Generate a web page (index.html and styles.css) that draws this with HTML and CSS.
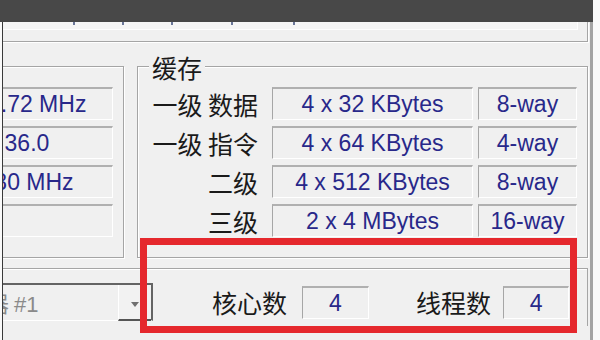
FILE: index.html
```html
<!DOCTYPE html>
<html lang="zh-CN">
<head>
    <meta charset="UTF-8">
    <meta name="viewport" content="width=device-width, initial-scale=1.0">
    <title>CPU 缓存</title>
    <link rel="stylesheet" href="styles.css">
</head>
<body>
    <div class="topbar"></div>

    <div class="frame">
        <!-- bottom edge of the box above, mostly scrolled away -->
        <div class="prev-box">
            <div class="prev-field">
                <span class="tick"></span>
                <span class="tick"></span>
                <span class="tick"></span>
                <span class="tick"></span>
                <span class="tick"></span>
            </div>
        </div>

        <div class="groups">
            <div class="group clocks">
                <div class="field clock">3591.72 MHz</div>
                <div class="field clock">x 36.0</div>
                <div class="field clock">99.80 MHz</div>
                <div class="field clock"></div>
            </div>

            <div class="group cache">
                <div class="legend">缓存</div>
                <div class="cache-grid">
                    <span class="label">一级 数据</span>
                    <div class="field">4 x 32 KBytes</div>
                    <div class="field">8-way</div>

                    <span class="label">一级 指令</span>
                    <div class="field">4 x 64 KBytes</div>
                    <div class="field">4-way</div>

                    <span class="label">二级</span>
                    <div class="field">4 x 512 KBytes</div>
                    <div class="field">8-way</div>

                    <span class="label">三级</span>
                    <div class="field">2 x 4 MBytes</div>
                    <div class="field">16-way</div>
                </div>
            </div>
        </div>

        <div class="bottom">
            <div class="combo">
                <span class="combo-text">处理器 <span class="latin">#1</span></span>
                <span class="combo-btn"><span class="arrow"></span></span>
            </div>
            <span class="blabel cores">核心数</span>
            <div class="field count first">4</div>
            <span class="blabel threads">线程数</span>
            <div class="field count second">4</div>
        </div>
    </div>

    <div class="highlight"></div>
</body>
</html>
```

FILE: styles.css
```css
* {
    box-sizing: border-box;
}

body {
    margin: 0;
    width: 600px;
    height: 340px;
    overflow: hidden;
    position: relative;
    background-color: #fafafa;
    font-family: "Noto Sans CJK SC", "Liberation Sans", sans-serif;
}

.topbar {
    width: 593px;
    height: 22px;
    background-color: #484848;
}

.frame {
    margin-left: 2px;
    width: 591px;
    height: 318px;
    background-color: #f0f0f0;
    border-left: 1px solid #3a3a3a;
    border-right: 3px solid #a4a4a4;
    overflow: hidden;
}

.prev-box {
    margin-left: -10px;
    width: 595px;
    height: 20px;
    border-bottom: 1px solid #a5a5a5;
    border-right: 1px solid #a5a5a5;
    box-shadow: 1px 1px 0 #fff;
}

.prev-field {
    display: flex;
    align-items: flex-start;
    width: 585px;
    height: 8px;
    background-color: #f6f6f6;
    border-bottom: 1px solid #fff;
    border-right: 1px solid #fff;
}

.tick {
    width: 2px;
    height: 3px;
    background-color: #6a7698;
}

.tick:nth-child(1) { margin-left: 80px; }
.tick:nth-child(2) { margin-left: 47px; }
.tick:nth-child(3) { margin-left: 47px; }
.tick:nth-child(4) { margin-left: 58px; }
.tick:nth-child(5) { margin-left: 60px; }

.groups {
    display: flex;
    gap: 13px;
    margin-top: 24px;
    margin-left: -10px;
}

.group {
    height: 192px;
    border: 1px solid #a5a5a5;
    box-shadow: inset 1px 1px 0 #fff, 1px 1px 0 #fff;
}

.clocks {
    width: 131px;
    padding: 20px 10px 0 0;
    display: flex;
    flex-direction: column;
    align-items: flex-end;
    gap: 6px;
}

.field {
    height: 33px;
    border-top: 2px solid #b0b0b0;
    border-left: 1px solid #a6a6a6;
    border-bottom: 1px solid #fff;
    border-right: 1px solid #fff;
    color: #28288a;
    font-family: "Liberation Sans", Arial, sans-serif;
    font-size: 23px;
    line-height: 30px;
    text-align: center;
    white-space: nowrap;
}

.clock {
    width: 190px;
}

.cache {
    width: 451px;
    padding: 0 10px 0 9px;
}

.legend {
    width: fit-content;
    margin: -14px 0 0 2px;
    padding: 0 3px;
    background-color: #f0f0f0;
    color: #1a1a1a;
    font-size: 25px;
    line-height: 28px;
}

.cache-grid {
    display: grid;
    grid-template-columns: 120px 201px 99px;
    grid-auto-rows: 33px;
    column-gap: 5px;
    row-gap: 6px;
    margin-top: 6px;
}

.label {
    padding-right: 9px;
    color: #1a1a1a;
    font-size: 25px;
    line-height: 34px;
    text-align: right;
    white-space: nowrap;
}

.bottom {
    display: flex;
    align-items: center;
    margin-top: 10px;
    margin-left: -10px;
    width: 595px;
    height: 58px;
    padding-top: 9px;
    border-top: 1px solid #a5a5a5;
    border-right: 1px solid #a5a5a5;
    border-left: 1px solid #a5a5a5;
    box-shadow: inset 1px 1px 0 #fff;
}

.combo {
    display: flex;
    justify-content: space-between;
    align-items: flex-start;
    flex-shrink: 0;
    margin-left: -54px;
    width: 213px;
    height: 38px;
    padding-left: 3px;
    border-top: 2px solid #646464;
    border-right: 2px solid #646464;
    border-bottom: 1px solid #fff;
}

.combo-text {
    color: #8a8a8a;
    font-size: 22px;
    line-height: 34px;
    white-space: nowrap;
}

.latin {
    font-family: "Liberation Sans", Arial, sans-serif;
}

.combo-btn {
    display: flex;
    align-items: center;
    justify-content: center;
    width: 33px;
    height: 36px;
    border-left: 1px solid #fff;
    border-bottom: 2px solid #555;
    background-color: #f2f2f2;
}

.arrow {
    width: 0;
    height: 0;
    margin-top: 4px;
    border-left: 4px solid transparent;
    border-right: 4px solid transparent;
    border-top: 5px solid #707070;
}

.blabel {
    flex-shrink: 0;
    color: #1a1a1a;
    font-size: 25px;
    line-height: 33px;
}

.cores {
    margin-left: 59px;
}

.threads {
    margin-left: 47px;
}

.count {
    flex-shrink: 0;
}

.count.first {
    width: 67px;
    margin-left: 15px;
}

.count.second {
    width: 66px;
    margin-left: 12px;
}

.highlight {
    position: absolute;
    left: 140px;
    top: 238px;
    width: 437px;
    height: 95px;
    border: 7px solid #e5282d;
}
```
